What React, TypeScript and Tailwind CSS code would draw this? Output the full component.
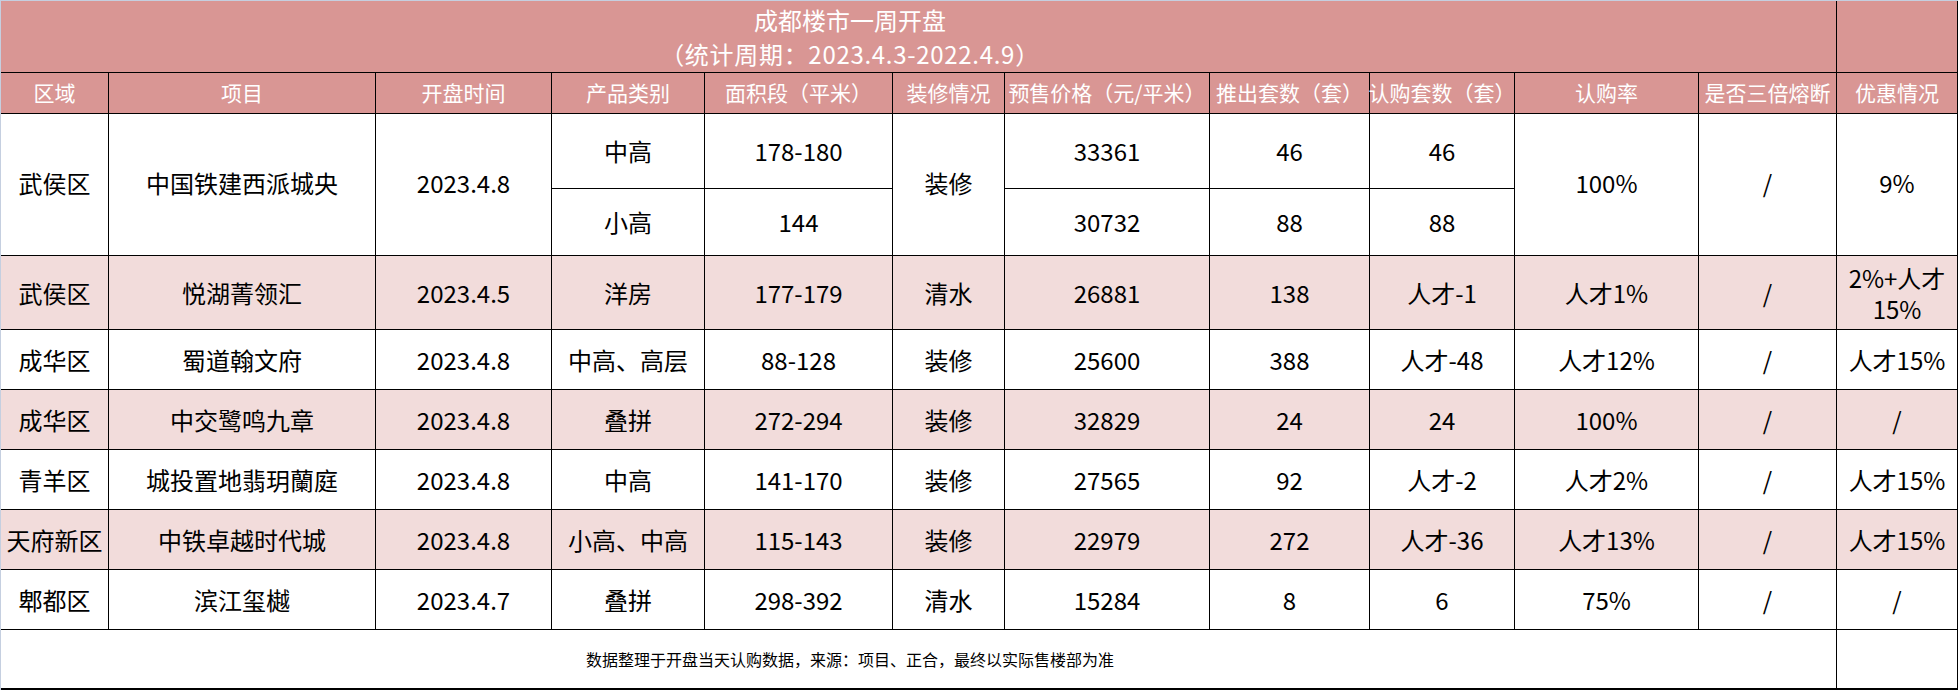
import type { ReactNode } from 'react'

type Row = {
	area: string
	name: string
	date: string
	type: string
	size: string
	deco: string
	price: string
	pushed: string
	sold: string
	rate: string
	fuse: string
	promo: ReactNode
	pink?: boolean
}

const headers = [
	'区域',
	'项目',
	'开盘时间',
	'产品类别',
	'面积段（平米）',
	'装修情况',
	'预售价格（元/平米）',
	'推出套数（套）',
	'认购套数（套）',
	'认购率',
	'是否三倍熔断',
	'优惠情况',
]

const rows: Row[] = [
	{
		area: '武侯区',
		name: '悦湖菁领汇',
		date: '2023.4.5',
		type: '洋房',
		size: '177-179',
		deco: '清水',
		price: '26881',
		pushed: '138',
		sold: '人才-1',
		rate: '人才1%',
		fuse: '/',
		promo: (
			<span className="leading-[31px]">
				2%+人才
				<br />
				15%
			</span>
		),
		pink: true,
	},
	{
		area: '成华区',
		name: '蜀道翰文府',
		date: '2023.4.8',
		type: '中高、高层',
		size: '88-128',
		deco: '装修',
		price: '25600',
		pushed: '388',
		sold: '人才-48',
		rate: '人才12%',
		fuse: '/',
		promo: '人才15%',
	},
	{
		area: '成华区',
		name: '中交鹭鸣九章',
		date: '2023.4.8',
		type: '叠拼',
		size: '272-294',
		deco: '装修',
		price: '32829',
		pushed: '24',
		sold: '24',
		rate: '100%',
		fuse: '/',
		promo: '/',
		pink: true,
	},
	{
		area: '青羊区',
		name: '城投置地翡玥蘭庭',
		date: '2023.4.8',
		type: '中高',
		size: '141-170',
		deco: '装修',
		price: '27565',
		pushed: '92',
		sold: '人才-2',
		rate: '人才2%',
		fuse: '/',
		promo: '人才15%',
	},
	{
		area: '天府新区',
		name: '中铁卓越时代城',
		date: '2023.4.8',
		type: '小高、中高',
		size: '115-143',
		deco: '装修',
		price: '22979',
		pushed: '272',
		sold: '人才-36',
		rate: '人才13%',
		fuse: '/',
		promo: '人才15%',
		pink: true,
	},
	{
		area: '郫都区',
		name: '滨江玺樾',
		date: '2023.4.7',
		type: '叠拼',
		size: '298-392',
		deco: '清水',
		price: '15284',
		pushed: '8',
		sold: '6',
		rate: '75%',
		fuse: '/',
		promo: '/',
	},
]

const Cell = ({
	children,
	className = '',
}: {
	children?: ReactNode
	className?: string
}) => (
	<div
		className={`flex items-center justify-center border-r border-b border-black text-center whitespace-nowrap ${className}`}
	>
		{children}
	</div>
)

const App = () => {
	return (
		<div
			className="w-[1958px] h-[690px] bg-white text-black overflow-hidden"
			style={{ fontFamily: '"Noto Sans CJK SC", "Noto Sans", sans-serif' }}
		>
			<div className="grid grid-cols-[108px_267px_176px_153px_188px_112px_205px_160px_145px_184px_138px_121px] grid-rows-[72px_41px_75px_67px_74px_60px_60px_60px_60px_60px_60px] border-l border-t border-[#c5cfe0]">
				{/* title */}
				<div className="col-span-10 flex flex-col items-center justify-center border-b border-black bg-[#d99694] text-[24px] leading-[34px] text-white">
					<span>成都楼市一周开盘</span>
					<span className="tracking-[0.7px]">（统计周期：2023.4.3-2022.4.9）</span>
				</div>
				<Cell className="bg-[#d99694]" />
				<Cell className="bg-[#d99694]" />

				{/* header */}
				{headers.map((h) => (
					<Cell key={h} className="bg-[#d99694] text-[21px] text-white">
						{h}
					</Cell>
				))}

				{/* first project, two product rows */}
				<Cell className="row-span-2 pb-[3px] text-[24px]">武侯区</Cell>
				<Cell className="row-span-2 pb-[3px] text-[24px]">中国铁建西派城央</Cell>
				<Cell className="row-span-2 pb-[3px] text-[24px]">2023.4.8</Cell>
				<Cell className="text-[24px]">中高</Cell>
				<Cell className="text-[24px]">178-180</Cell>
				<Cell className="row-span-2 pb-[3px] text-[24px]">装修</Cell>
				<Cell className="text-[24px]">33361</Cell>
				<Cell className="text-[24px]">46</Cell>
				<Cell className="text-[24px]">46</Cell>
				<Cell className="row-span-2 pb-[3px] text-[24px]">100%</Cell>
				<Cell className="row-span-2 pb-[3px] text-[24px]">/</Cell>
				<Cell className="row-span-2 pb-[3px] text-[24px]">9%</Cell>
				<Cell className="text-[24px]">小高</Cell>
				<Cell className="text-[24px]">144</Cell>
				<Cell className="text-[24px]">30732</Cell>
				<Cell className="text-[24px]">88</Cell>
				<Cell className="text-[24px]">88</Cell>

				{rows.map((r) => {
					const bg = r.pink ? 'bg-[#f2dcdb]' : 'bg-white'
					const vals = [
						r.area,
						r.name,
						r.date,
						r.type,
						r.size,
						r.deco,
						r.price,
						r.pushed,
						r.sold,
						r.rate,
						r.fuse,
						r.promo,
					]
					return vals.map((v, i) => (
						<Cell key={r.name + i} className={`${bg} text-[24px]`}>
							{v}
						</Cell>
					))
				})}

				{/* footer */}
				<div className="col-span-10 flex items-center justify-center border-b-2 border-black text-[16px]">
					数据整理于开盘当天认购数据，来源：项目、正合，最终以实际售楼部为准
				</div>
				<Cell className="border-b-2" />
				<Cell className="border-b-2" />
			</div>
		</div>
	)
}

export default App
